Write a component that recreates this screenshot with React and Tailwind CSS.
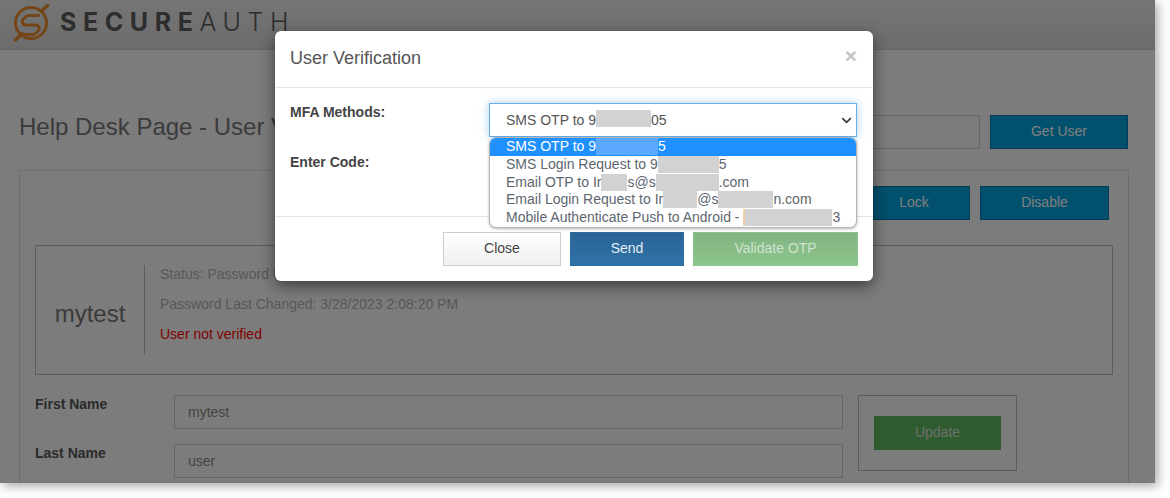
import React from 'react';
import { ChevronDown } from 'lucide-react';

const Blur = ({ w, className = 'bg-[#d2d2d2]' }) => (
  <span className={`inline-block h-[17px] align-top ${className}`} style={{ width: w }} />
);

const options = [
  { before: 'SMS OTP to 9', w: 62, after: '5', active: true },
  { before: 'SMS Login Request to 9', w: 61, after: '5' },
  { before: 'Email OTP to Ir', w: 26, after: 's@s', w2: 63, after2: '.com' },
  { before: 'Email Login Request to Ir', w: 34, after: '@s', w2: 55, after2: 'n.com' },
  { before: 'Mobile Authenticate Push to Android - ', w: 89, after: '3', sliver: true },
];

const PageButton = ({ children, className = '' }) => (
  <button className={`h-[34px] border border-[#0a7bab] bg-[#00a0dc] pb-[2px] text-sm text-white ${className}`}>
    {children}
  </button>
);

const Field = ({ label, value }) => (
  <div className="flex h-[34px]">
    <label className="w-[139px] text-sm leading-[18px] font-bold text-[#555]">{label}</label>
    <input
      readOnly
      value={value}
      className="h-[34px] w-[669px] border border-[#ccc] bg-[#f9f9f9] px-[13px] text-sm text-[#888]"
    />
  </div>
);

const Logo = () => (
  <svg width="40" height="42" viewBox="0 0 40 42" fill="none" stroke="#e88a2e" strokeWidth="3" strokeLinecap="round" strokeLinejoin="round">
    <circle cx="19" cy="19" r="15.5" />
    <path d="M3.5 36 L10 29.5 M29 7.5 L35.5 1.5" strokeWidth="3.4" />
    <path d="M26.5 11.5 H17 C15.5 11.5 14.5 12 13.5 13 L11.5 15 C9 17.5 10.5 21 14 21 H23.5 C27 21 28.5 24.5 26 27 L24 29 C23 30 22 30.5 20.5 30.5 H11" />
  </svg>
);

export default function App() {
  return (
    <div className="h-[498px] w-[1170px] overflow-hidden bg-white font-['Liberation_Sans',Arial,sans-serif]">
      <div className="relative h-[483px] w-[1155px] overflow-hidden bg-[#f9f9f9] shadow-[3px_3px_10px_rgba(0,0,0,0.35)]">
        <header className="flex h-[50px] items-center gap-[8px] border-b border-[#cccccc] bg-gradient-to-b from-[#eaeaea] to-[#dadada] pl-[12px]">
          <Logo />
          <div className="mb-[4px] font-['Inter',sans-serif] text-[25px] leading-none tracking-[6.6px] text-[#5a5a5a]">
            <span className="font-bold">SECURE</span>
            <span className="font-light">AUTH</span>
          </div>
        </header>

        <div className="flex items-start justify-between pl-[19px] pr-[27px] pt-[65px]">
          <h1 className="text-2xl leading-[24px] font-normal text-[#777]">Help Desk Page - User V</h1>
          <div className="flex gap-[10px]">
            <input readOnly className="h-[34px] w-[300px] border border-[#ccc] bg-[#f9f9f9]" />
            <PageButton className="w-[138px]">Get User</PageButton>
          </div>
        </div>

        <section className="ml-[19px] mr-[26px] mt-[21px] h-[400px] border border-[#ddd] pl-[15px] pr-[15px] pt-[15px]">
          <div className="flex justify-end gap-[10px] pr-[4px]">
            <PageButton className="w-[112px]">Lock</PageButton>
            <PageButton className="w-[129px]">Disable</PageButton>
          </div>

          <div className="mt-[25px] flex h-[130px] w-[1078px] items-center border border-[#b8b8b8]">
            <div className="flex h-[90px] w-[109px] items-center justify-center border-r border-[#b8b8b8] pt-[8px] text-2xl text-[#777]">
              mytest
            </div>
            <div className="-mt-[12px] flex flex-col gap-[14px] pl-[15px] text-sm leading-[16px] text-[#b0b0b0]">
              <p>Status: Password U</p>
              <p>Password Last Changed: 3/28/2023 2:08:20 PM</p>
              <p className="text-[#ff0000]">User not verified</p>
            </div>
          </div>

          <div className="mt-[20px] flex gap-[15px]">
            <div className="flex flex-col gap-[15px]">
              <Field label="First Name" value="mytest" />
              <Field label="Last Name" value="user" />
            </div>
            <div className="flex h-[76px] w-[159px] items-center justify-center border border-[#b8b8b8]">
              <button className="h-[34px] w-[127px] bg-[#5cb85c] pb-[2px] text-sm text-[#ddd]">Update</button>
            </div>
          </div>
        </section>

        {/* dimmed backdrop */}
        <div className="absolute inset-0 bg-black/50" />

        {/* modal */}
        <div className="absolute left-[275px] top-[31px] h-[250px] w-[598px] rounded-[6px] bg-white shadow-[0_5px_15px_rgba(0,0,0,0.5)]">
          <div className="flex h-[57px] items-center justify-between border-b border-[#e5e5e5] px-[15px] pb-[2px]">
            <h4 className="text-lg font-normal text-[#555]">User Verification</h4>
            <span className="mb-[6px] pr-[1px] text-[21px] font-bold leading-none text-[#c4c4c4]">×</span>
          </div>

          <div className="h-[129px] border-b border-[#e5e5e5] px-[15px] pt-[15px]">
            <div className="flex h-[34px]">
              <label className="-mt-[2px] w-[199px] pt-[1px] text-sm font-bold text-[#444]">MFA Methods:</label>
              <div className="flex h-[34px] w-[368px] items-center justify-between border border-[#66afe9] pl-[16px] pr-[2px] text-sm text-[#555] shadow-[0_0_8px_rgba(102,175,233,0.6)]">
                <span>
                  SMS OTP to 9<Blur w={55} />05
                </span>
                <ChevronDown size={15} strokeWidth={3} className="text-[#444]" />
              </div>
            </div>
            <label className="mt-[15px] block text-sm font-bold text-[#444]">Enter Code:</label>
          </div>

          <div className="flex justify-end gap-[9px] pr-[15px] pt-[15px]">
            <button className="h-[34px] w-[118px] border border-[#ccc] bg-gradient-to-b from-white to-[#f0f0f0] pb-[2px] text-sm text-[#444]">
              Close
            </button>
            <button className="h-[34px] w-[114px] border border-[#2e6da4] bg-gradient-to-b from-[#2a6496] to-[#3072a8] pb-[2px] text-sm text-[#e6eef5]">
              Send
            </button>
            <button className="h-[34px] w-[165px] border border-[#8cc88c] bg-gradient-to-b from-[#82b482] to-[#8cc48c] pb-[2px] text-sm text-[#cfe3cf]">
              Validate OTP
            </button>
          </div>

          {/* open select list */}
          <ul className="absolute left-[214px] top-[106px] w-[368px] overflow-hidden rounded-[7px] border border-[#b5b5b5] bg-white text-sm leading-[17.8px] text-[#5c6670] shadow-[0_1px_3px_rgba(0,0,0,0.3)]">
            {options.map((o) => (
              <li key={o.before} className={`h-[17.8px] whitespace-nowrap pl-[16px] ${o.active ? 'bg-[#1e90ff] text-white' : ''}`}>
                {o.before}
                <Blur
                  w={o.w}
                  className={o.active ? 'bg-[#5aa9ff]' : o.sliver ? 'border-l-2 border-[#f6cfa8] bg-[#d2d2d2]' : 'bg-[#d2d2d2]'}
                />
                {o.after}
                {o.w2 && <Blur w={o.w2} />}
                {o.after2}
              </li>
            ))}
          </ul>
        </div>
      </div>
    </div>
  );
}
